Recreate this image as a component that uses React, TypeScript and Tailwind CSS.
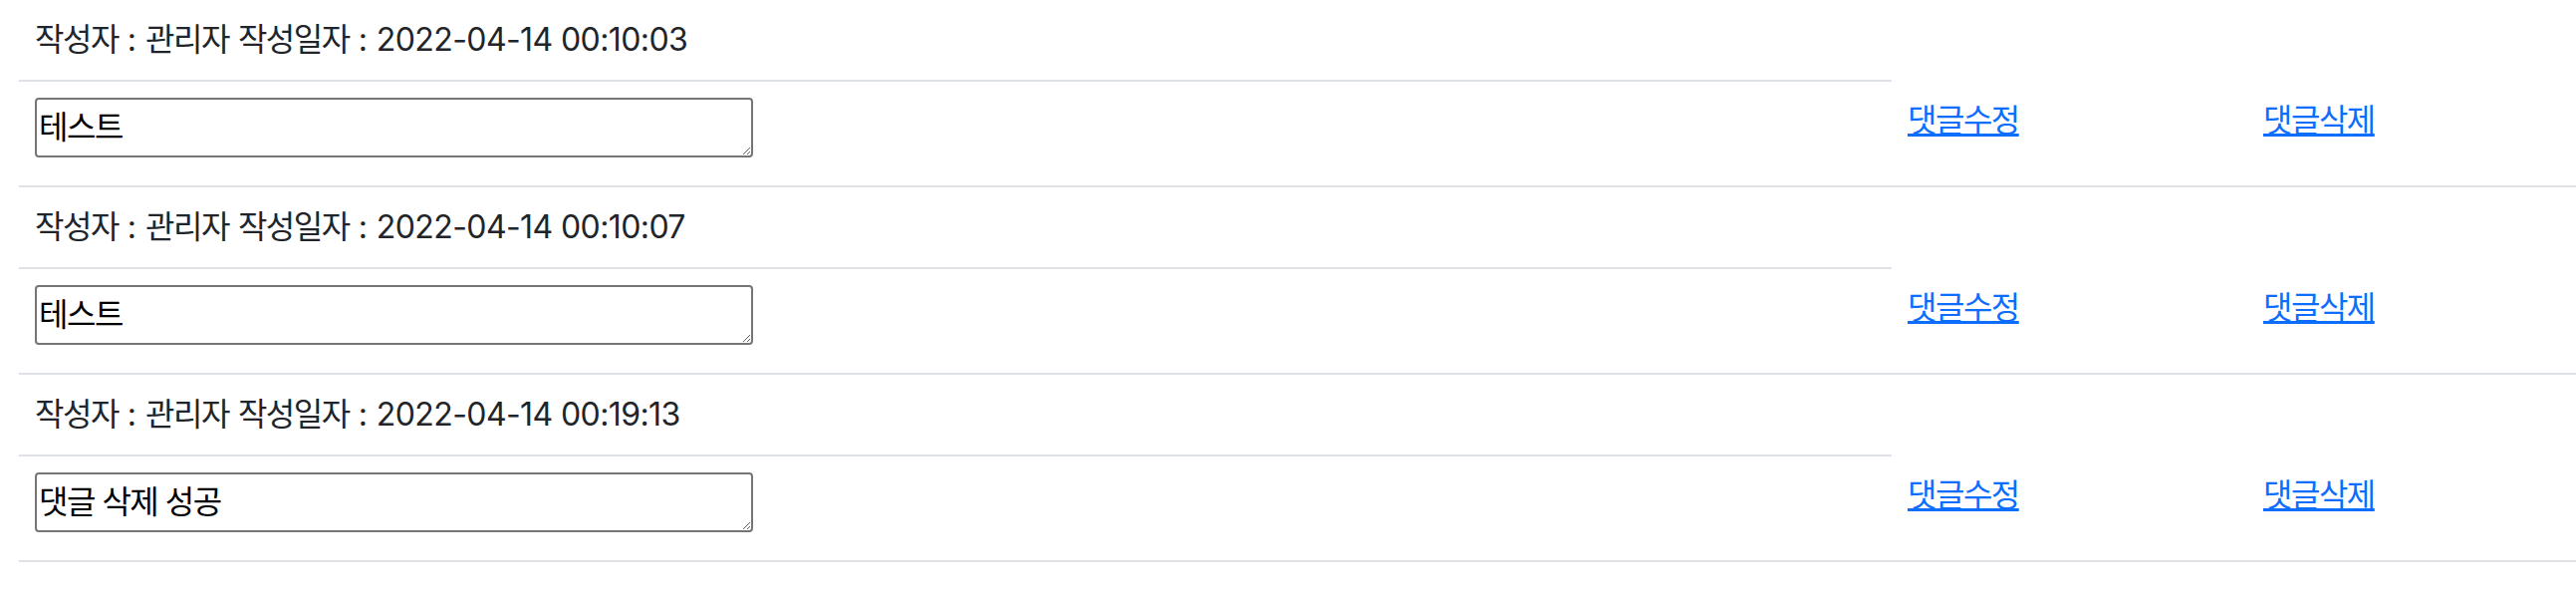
import React from 'react';

interface Comment {
  writer: string;
  date: string;
  body: string;
}

const comments: Comment[] = [
  { writer: '관리자', date: '2022-04-14 00:10:03', body: '테스트' },
  { writer: '관리자', date: '2022-04-14 00:10:07', body: '테스트' },
  { writer: '관리자', date: '2022-04-14 00:19:13', body: '댓글 삭제 성공' },
];

function Ko({ children }: { children: React.ReactNode }) {
  return <span className="tracking-[-1.5px]">{children}</span>;
}

export default function App() {
  return (
    <div className="min-h-screen bg-white pl-[19px] font-[Inter,'Noto_Sans_CJK_KR',sans-serif] text-[32px] leading-[48px] text-[#212529]">
      <table className="w-full table-fixed border-collapse">
        <colgroup>
          <col className="w-[1880px]" />
          <col className="w-[357px]" />
          <col />
        </colgroup>
        <tbody>
          {comments.map((c, i) => (
            <React.Fragment key={i}>
              <tr>
                <td className="border-b-2 border-[#dee2e6] p-4 align-top whitespace-nowrap">
                  <Ko>작성자</Ko> : <Ko>{c.writer}</Ko> <Ko>작성일자</Ko> :{' '}
                  <span className="tracking-[-0.6px]">{c.date}</span>
                </td>
              </tr>
              <tr>
                <td className="border-b-2 border-[#dee2e6] p-4 align-top">
                  <textarea
                    rows={1}
                    defaultValue={c.body}
                    className="mb-3 block h-[60px] w-[721px] rounded-[4px] border-2 border-[#767676] px-[2px] py-[4px] text-[32px] leading-[48px] tracking-[-1.5px] text-black"
                  />
                </td>
                <td className="border-b-2 border-[#dee2e6] p-4 align-top">
                  <a href="#" className="text-[#0d6efd] underline">
                    <Ko>댓글수정</Ko>
                  </a>
                </td>
                <td className="border-b-2 border-[#dee2e6] p-4 align-top">
                  <a href="#" className="text-[#0d6efd] underline">
                    <Ko>댓글삭제</Ko>
                  </a>
                </td>
              </tr>
            </React.Fragment>
          ))}
        </tbody>
      </table>
    </div>
  );
}
